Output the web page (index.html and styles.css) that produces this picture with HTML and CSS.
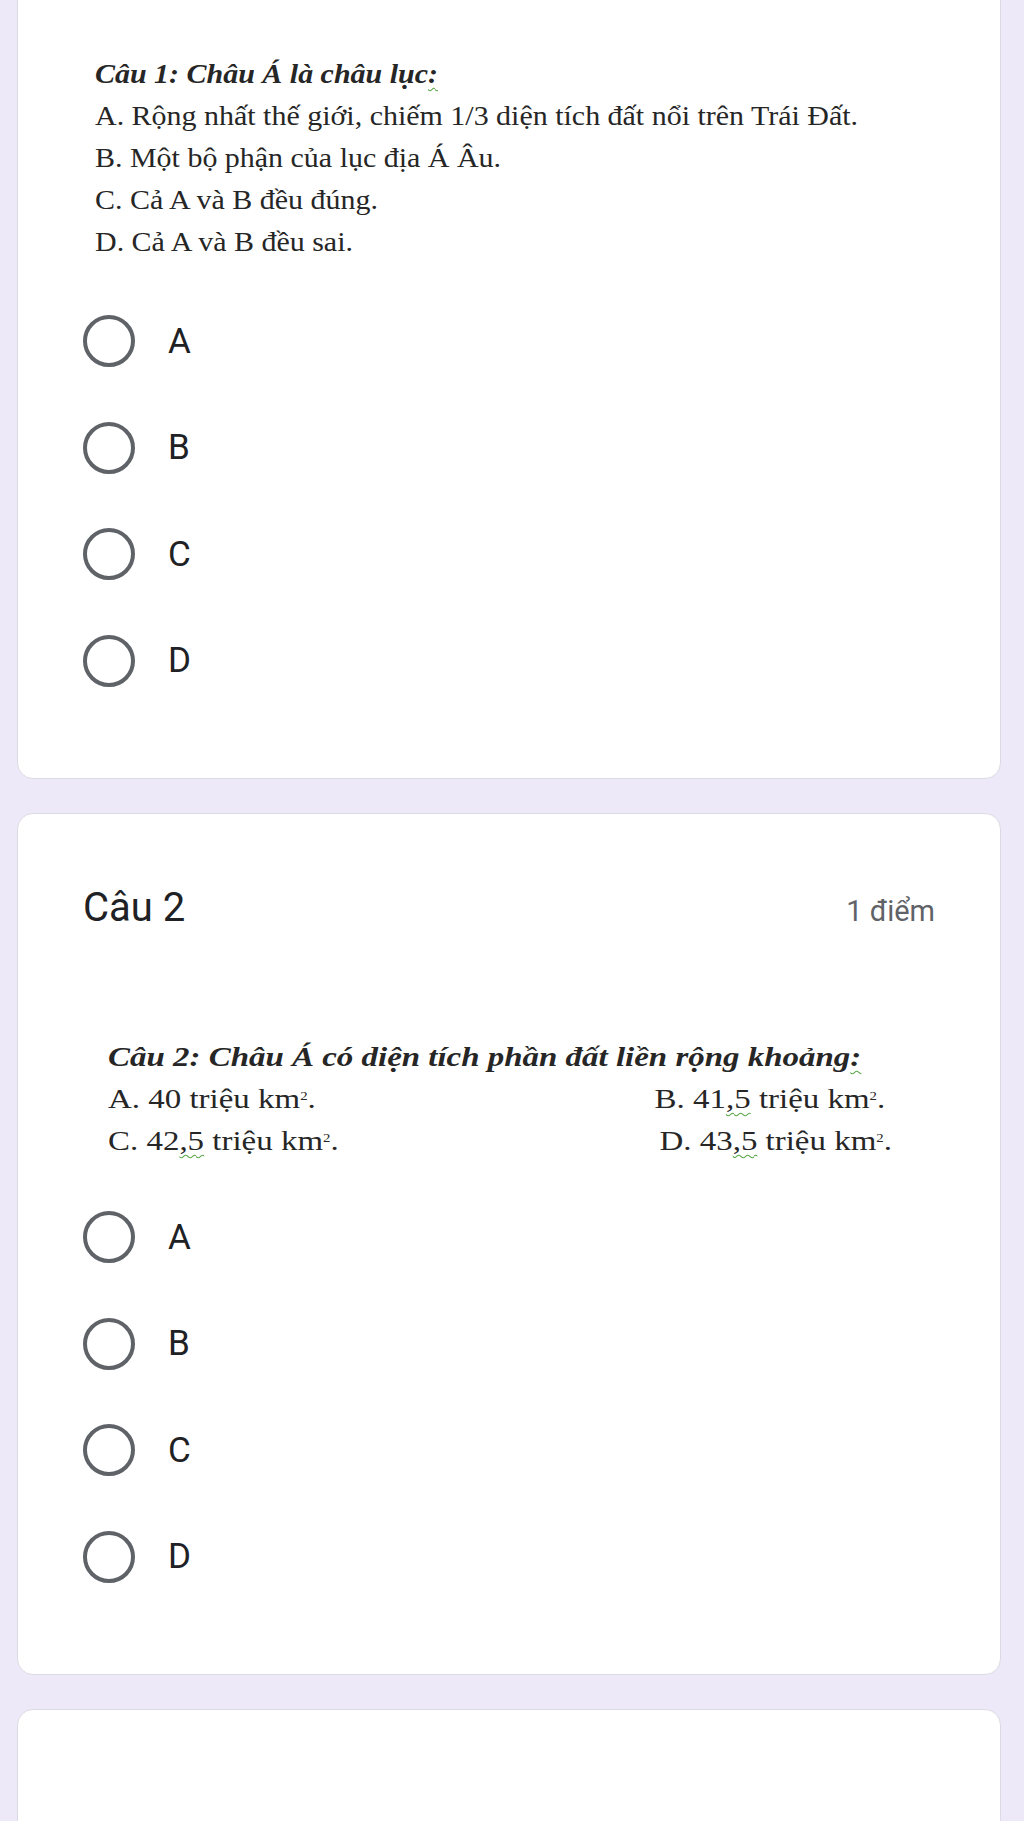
FILE: index.html
```html
<!DOCTYPE html>
<html lang="vi">
<head>
<meta charset="utf-8">
<title>Câu hỏi</title>
<link rel="stylesheet" href="styles.css">
</head>
<body>
<main class="page">
  <section class="card card-first">
    <div class="q-image q-image-1">
      <p class="q-title">Câu 1: Châu Á là châu lục<span class="spell">:</span></p>
      <p>A. Rộng nhất thế giới, chiếm 1/3 diện tích đất nổi trên Trái Đất.</p>
      <p>B. Một bộ phận của lục địa Á Âu.</p>
      <p>C. Cả A và B đều đúng.</p>
      <p>D. Cả A và B đều sai.</p>
    </div>
    <ul class="options">
      <li class="option"><span class="radio"></span><span class="label">A</span></li>
      <li class="option"><span class="radio"></span><span class="label">B</span></li>
      <li class="option"><span class="radio"></span><span class="label">C</span></li>
      <li class="option"><span class="radio"></span><span class="label">D</span></li>
    </ul>
  </section>

  <section class="card">
    <header class="q-header">
      <h2 class="q-name">Câu 2</h2>
      <span class="q-points">1 điểm</span>
    </header>
    <div class="q-image q-image-2">
      <p class="q-title">Câu 2: Châu Á có diện tích phần đất liền rộng khoảng<span class="spell">:</span></p>
      <div class="two-col">
        <p>A. 40 triệu km<sup>2</sup>.</p>
        <p>B. 41<span class="spell">,5</span> triệu km<sup>2</sup>.</p>
      </div>
      <div class="two-col">
        <p>C. 42<span class="spell">,5</span> triệu km<sup>2</sup>.</p>
        <p class="shift">D. 43<span class="spell">,5</span> triệu km<sup>2</sup>.</p>
      </div>
    </div>
    <ul class="options options-2">
      <li class="option"><span class="radio"></span><span class="label">A</span></li>
      <li class="option"><span class="radio"></span><span class="label">B</span></li>
      <li class="option"><span class="radio"></span><span class="label">C</span></li>
      <li class="option"><span class="radio"></span><span class="label">D</span></li>
    </ul>
  </section>

  <section class="card card-last"></section>
</main>
</body>
</html>
```

FILE: styles.css
```css
html, body {
  margin: 0;
  padding: 0;
  background: #ede9f8;
}

body {
  font-family: Roboto, "Noto Sans", Arial, sans-serif;
  color: #202124;
  overflow: hidden;
  height: 1821px;
}

.page {
  display: flex;
  flex-direction: column;
  gap: 34px;
  padding: 0 23px 0 17px;
}

.card {
  background: #fff;
  border: 1px solid #dcdbe3;
  border-radius: 16px;
  padding: 0 65px 64px 65px;
  overflow: hidden;
}

.card-first {
  margin-top: -30px;
  padding-top: 82px;
}

.card-last {
  height: 200px;
  padding: 0;
}

/* Scanned question images (slightly stretched horizontally) rendered as text */
.q-image {
  font-family: "Liberation Serif", "Times New Roman", serif;
  color: #262626;
  line-height: 42px;
  width: max-content;
  transform-origin: left top;
}

.q-image p {
  margin: 0;
  white-space: nowrap;
}

.q-title {
  font-weight: bold;
  font-style: italic;
}

.q-image-1 {
  font-size: 28px;
  margin-left: 12px;
  transform: scaleX(1.07);
}

.q-image-2 {
  font-size: 27px;
  margin-left: 25px;
  margin-top: 104px;
  transform: scaleX(1.22);
}

.two-col {
  display: grid;
  grid-template-columns: 448px auto;
}

.two-col .shift {
  padding-left: 4px;
}

.spell {
  text-decoration: underline wavy #5aa845;
  text-decoration-thickness: 1px;
  text-underline-offset: 4px;
}

sup {
  font-size: 0.45em;
  vertical-align: 0.7em;
  line-height: 0;
}

.options {
  list-style: none;
  margin: 25px 0 0 0;
  padding: 0;
  display: flex;
  flex-direction: column;
}

.options-2 {
  margin-top: 22px;
}

.option {
  height: 106.5px;
  display: flex;
  align-items: center;
  gap: 33px;
}

.radio {
  box-sizing: border-box;
  width: 52px;
  height: 52px;
  border: 4.5px solid #5f6368;
  border-radius: 50%;
  flex: none;
}

.label {
  font-size: 35px;
  color: #202124;
}

.q-header {
  display: flex;
  justify-content: space-between;
  align-items: baseline;
  padding-top: 70px;
}

.q-name {
  margin: 0;
  font-weight: 400;
  font-size: 40px;
  line-height: 48px;
  color: #202124;
}

.q-points {
  font-size: 29px;
  color: #5f6368;
}
```
